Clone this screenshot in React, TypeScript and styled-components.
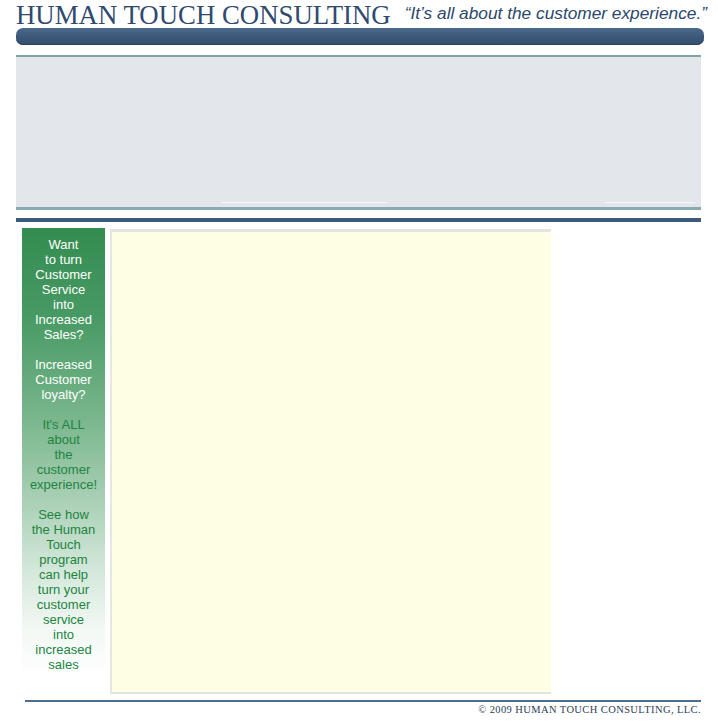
import React from 'react'
import styled, { createGlobalStyle } from 'styled-components'

const GlobalStyle = createGlobalStyle`
  html, body {
    margin: 0;
    padding: 0;
    background: #ffffff;
  }
`

const Page = styled.div`
  width: 719px;
  padding-left: 16px;
  box-sizing: border-box;
  display: flex;
  flex-direction: column;
`

const Masthead = styled.header`
  display: flex;
  align-items: flex-end;
  height: 27px;
  width: 688px;
`

const Logo = styled.h1`
  margin: 0;
  flex: 0 0 auto;
  font-family: 'Liberation Serif', 'DejaVu Serif', serif;
  font-weight: normal;
  font-size: 26.8px;
  line-height: 24px;
  color: #2e4a6f;
  white-space: nowrap;
`

const Tagline = styled.p`
  margin: 0 0 4px 14px;
  font-family: 'Liberation Sans', Arial, sans-serif;
  font-style: italic;
  font-size: 17.3px;
  line-height: 20px;
  color: #2b476b;
  white-space: nowrap;
`

const NavBar = styled.div`
  margin-top: 1px;
  width: 688px;
  height: 17px;
  border-radius: 7px;
  background: linear-gradient(#4a6a8c, #3a5676 60%, #34506f);
  box-shadow: inset 0 -1px 0 #2a4160;
`

const Banner = styled.section`
  margin-top: 10px;
  width: 685px;
  display: flex;
  flex-direction: column;
`

const Rule = styled.div<{ $color: string; $h: number }>`
  height: ${(p) => p.$h}px;
  background: ${(p) => p.$color};
`

const BannerBody = styled.div`
  height: 150px;
  background: #e3e7eb;
  display: flex;
  align-items: flex-end;
  padding-bottom: 4px;
  box-sizing: border-box;
`

const Glint = styled.span<{ $left: number; $w: number }>`
  margin-left: ${(p) => p.$left}px;
  width: ${(p) => p.$w}px;
  height: 1px;
  background: #f6f8f9;
`

const DarkRule = styled.div`
  margin-top: 8px;
  width: 685px;
  height: 4px;
  background: #3d5a78;
`

const Content = styled.main`
  margin-top: 6px;
  display: flex;
  align-items: flex-start;
`

const Sidebar = styled.aside`
  margin-left: 6px;
  width: 83px;
  height: 470px;
  box-sizing: border-box;
  padding-top: 9px;
  background: linear-gradient(
    #338c50 0px,
    #489a64 90px,
    #79b68c 190px,
    #a8cfb4 270px,
    #d2e7d9 340px,
    #f2f8f4 400px,
    #ffffff 450px
  );
  font-family: 'Liberation Sans', Arial, sans-serif;
  font-size: 13px;
  line-height: 15px;
  text-align: center;
`

const Blurb = styled.p<{ $tone: 'light' | 'dark' }>`
  margin: 0 0 15px;
  color: ${(p) => (p.$tone === 'light' ? '#ffffff' : '#21843f')};
`

const Panel = styled.div`
  margin-left: 5px;
  margin-top: 1px;
  width: 441px;
  height: 465px;
  box-sizing: border-box;
  background: #fefee4;
  border-top: 3px solid #e4e5de;
  border-left: 2px solid #e6e7e0;
  border-bottom: 2px solid #e4e5de;
`

const Footer = styled.footer`
  margin-left: 9px;
  margin-top: 2px;
  width: 676px;
  display: flex;
  flex-direction: column;
  align-items: flex-end;
`

const FooterRule = styled.div`
  width: 100%;
  height: 2px;
  background: #4d6c92;
`

const Copyright = styled.p`
  margin: 2px 0 0;
  font-family: 'Liberation Serif', 'DejaVu Serif', serif;
  font-size: 10.5px;
  line-height: 12px;
  text-transform: uppercase;
  letter-spacing: 0.4px;
  color: #2c3e55;
`

const sidebarText: { tone: 'light' | 'dark'; lines: string[] }[] = [
  {
    tone: 'light',
    lines: ['Want', 'to turn', 'Customer', 'Service', 'into', 'Increased', 'Sales?'],
  },
  { tone: 'light', lines: ['Increased', 'Customer', 'loyalty?'] },
  { tone: 'dark', lines: ["It's ALL", 'about', 'the', 'customer', 'experience!'] },
  {
    tone: 'dark',
    lines: [
      'See how',
      'the Human',
      'Touch',
      'program',
      'can help',
      'turn your',
      'customer',
      'service',
      'into',
      'increased',
      'sales',
    ],
  },
]

export default function App() {
  return (
    <>
      <GlobalStyle />
      <Page>
        <Masthead>
          <Logo>HUMAN TOUCH CONSULTING</Logo>
          <Tagline>“It’s all about the customer experience.”</Tagline>
        </Masthead>
        <NavBar />
        <Banner>
          <Rule $color="#7fa2ab" $h={2} />
          <BannerBody>
            <Glint $left={206} $w={165} />
            <Glint $left={218} $w={90} />
          </BannerBody>
          <Rule $color="#8aaab3" $h={3} />
        </Banner>
        <DarkRule />
        <Content>
          <Sidebar>
            {sidebarText.map((b, i) => (
              <Blurb key={i} $tone={b.tone}>
                {b.lines.map((l, j) => (
                  <React.Fragment key={j}>
                    {l}
                    {j < b.lines.length - 1 && <br />}
                  </React.Fragment>
                ))}
              </Blurb>
            ))}
          </Sidebar>
          <Panel />
        </Content>
        <Footer>
          <FooterRule />
          <Copyright>© 2009 Human Touch Consulting, LLC.</Copyright>
        </Footer>
      </Page>
    </>
  )
}
